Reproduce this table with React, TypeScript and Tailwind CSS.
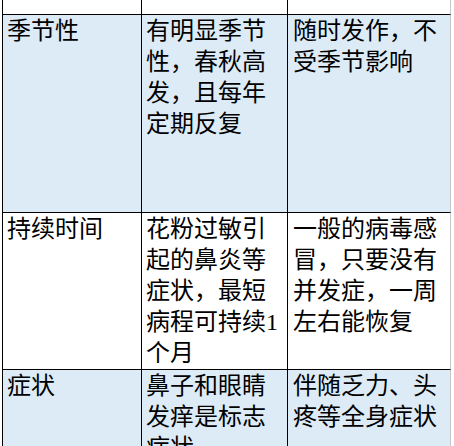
import React from 'react'

type Row = {
  height: string
  tone: 'white' | 'blue'
  cells: [string, string, string]
}

const ROWS: Row[] = [
  { height: 'h-[15px]', tone: 'white', cells: ['', '', ''] },
  {
    height: 'h-[198px]',
    tone: 'blue',
    cells: ['季节性', '有明显季节性，春秋高发，且每年定期反复', '随时发作，不受季节影响'],
  },
  {
    height: 'h-[157px]',
    tone: 'white',
    cells: ['持续时间', '花粉过敏引起的鼻炎等症状，最短病程可持续1个月', '一般的病毒感冒，只要没有并发症，一周左右能恢复'],
  },
  {
    height: 'h-[120px]',
    tone: 'blue',
    cells: ['症状', '鼻子和眼睛发痒是标志症状', '伴随乏力、头疼等全身症状'],
  },
]

function Cell({ text, className }: { text: string; className: string }) {
  return (
    <div className={`overflow-hidden border-b border-l border-black pt-[1px] ${className}`}>
      {text}
    </div>
  )
}

export default function App() {
  return (
    <div
      className="h-[446px] w-[454px] overflow-hidden bg-white pl-[2px] text-[24px] leading-[31px] text-black"
      style={{ fontFamily: '"Liberation Serif", "Noto Sans CJK SC", serif' }}
    >
      {ROWS.map((row, i) => (
        <div
          key={i}
          className={`grid w-[449px] grid-cols-[139px_146px_164px] ${row.height} ${
            row.tone === 'blue' ? 'bg-[#ddebf7]' : 'bg-white'
          }`}
        >
          <Cell text={row.cells[0]} className="pl-[4px]" />
          <Cell text={row.cells[1]} className="pl-[4px]" />
          <Cell text={row.cells[2]} className="border-r border-r-[#c6c6c6] pl-[5px]" />
        </div>
      ))}
    </div>
  )
}
